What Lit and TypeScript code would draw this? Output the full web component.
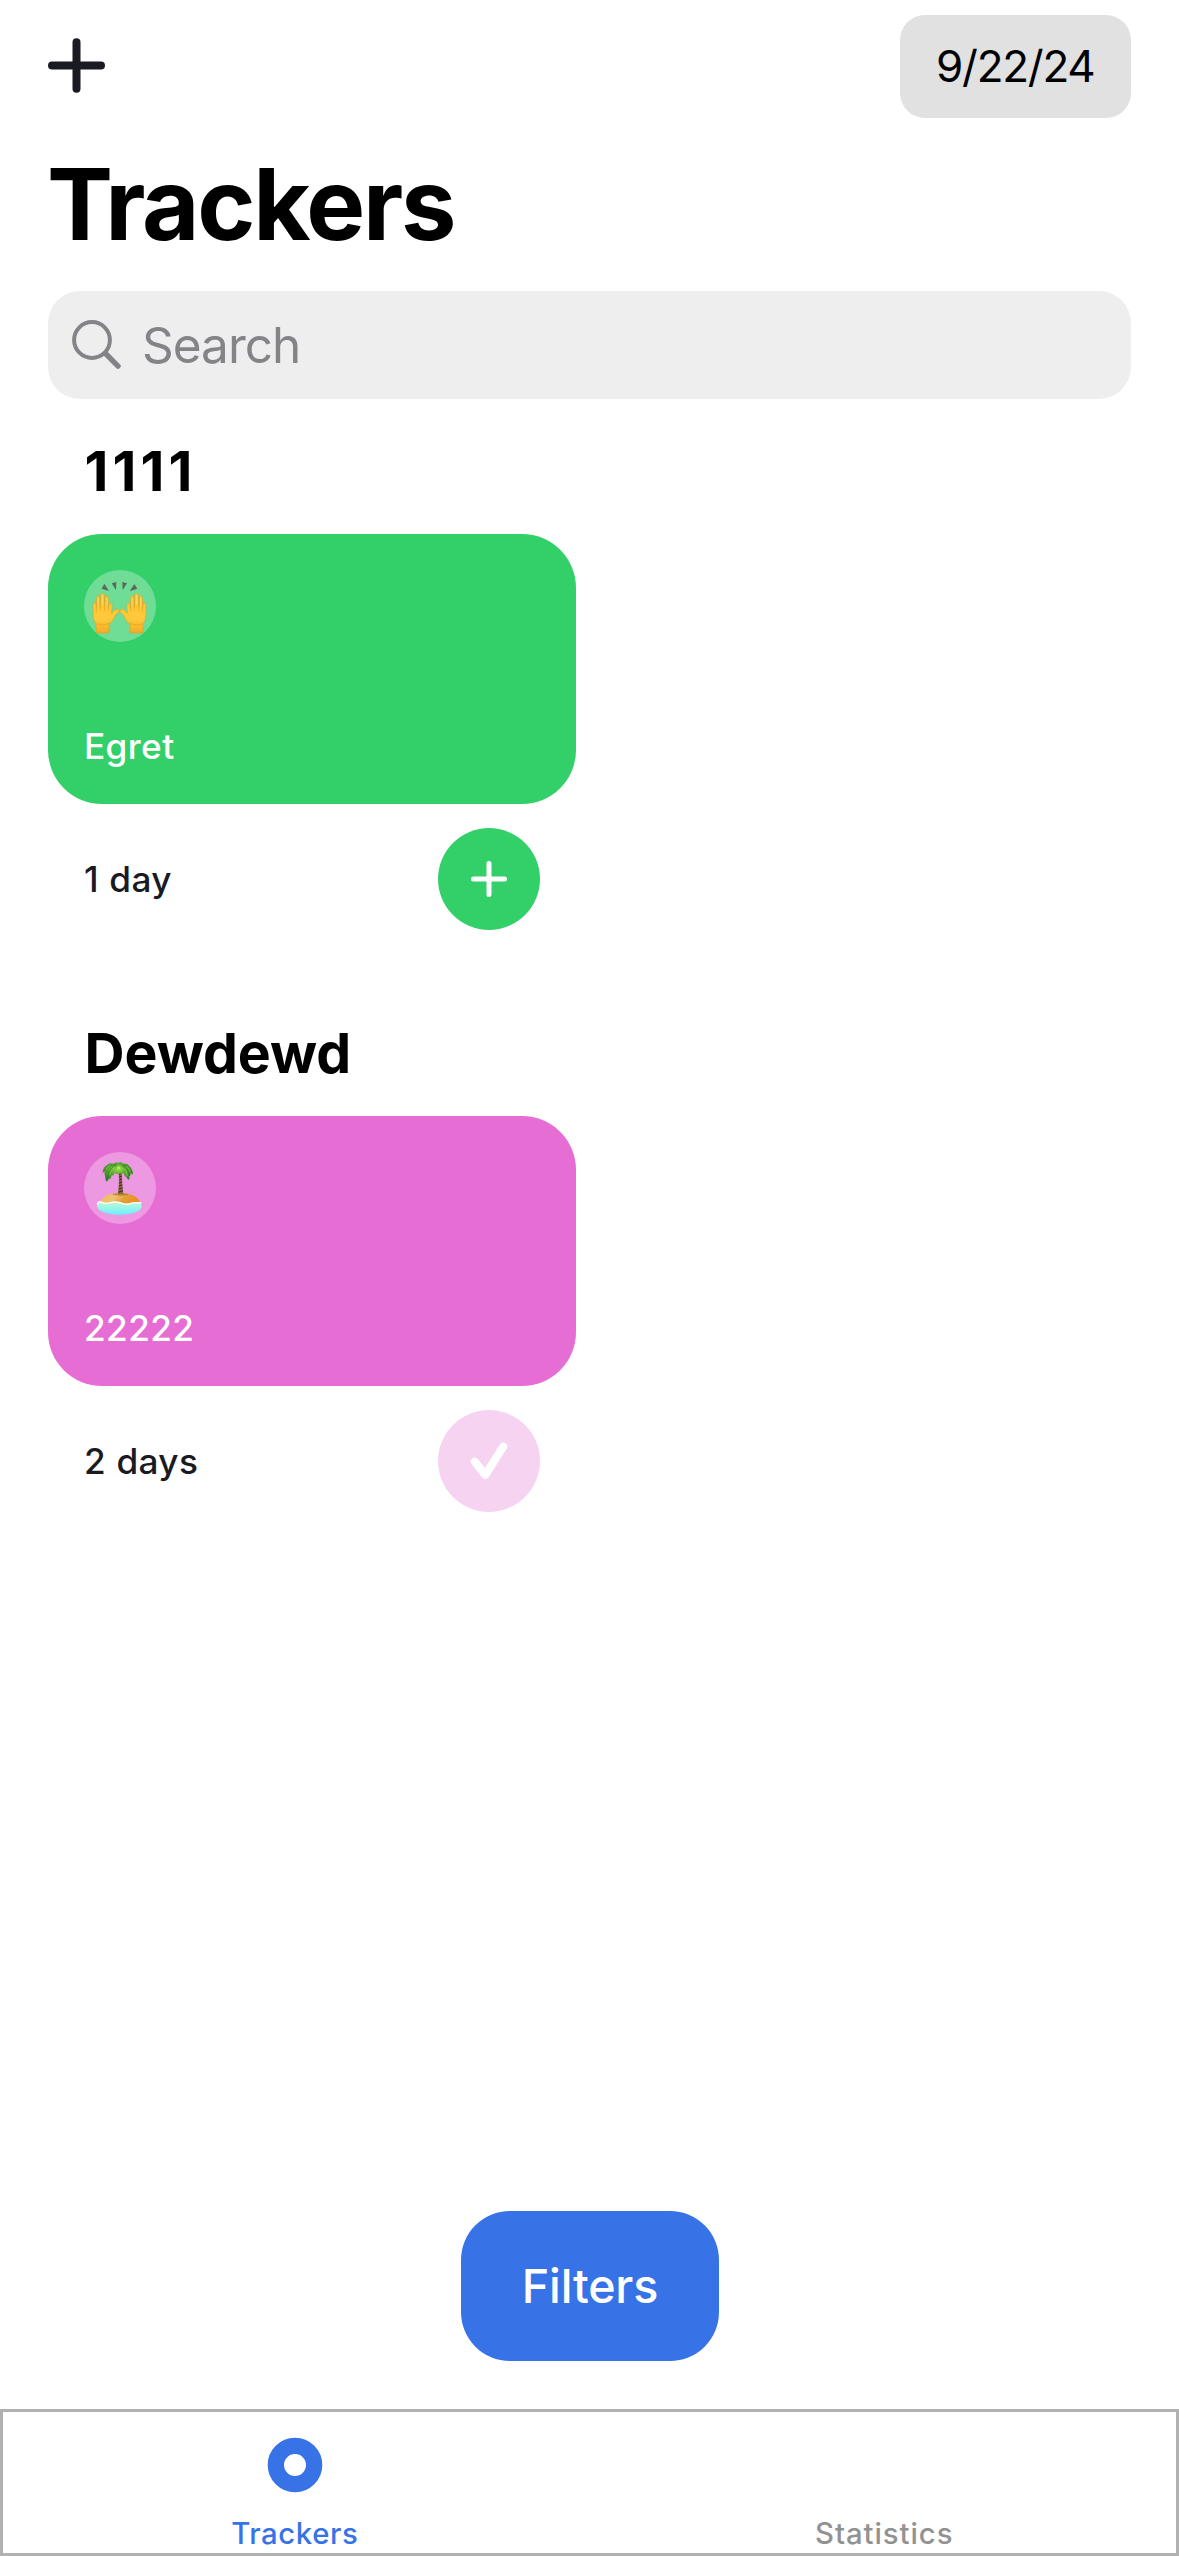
import { LitElement, html, css, svg, TemplateResult } from "lit";
import { customElement, property } from "lit/decorators.js";
import { styleMap } from "lit/directives/style-map.js";

interface Tracker {
  category: string;
  tracking: string;
  name: string;
  days: string;
  color: string;
  done: boolean;
  emoji: "hands" | "island";
}

const TRACKERS: Tracker[] = [
  { category: "1111", tracking: "4.1px", name: "Egret", days: "1 day", color: "#33cf69", done: false, emoji: "hands" },
  { category: "Dewdewd", tracking: "-0.05px", name: "22222", days: "2 days", color: "#e66dd4", done: true, emoji: "island" },
];

const hand = svg`
  <path fill="url(#skin)" stroke="#e69a16" stroke-width="1.6" stroke-linejoin="round"
    d="M79 219 L78 192 Q69 180 69 164 L69 134 Q70 128 74 129 Q78 129 78.500 135 L79 146 L80 113 Q81 107 85 107 Q89 108 89 113 L90 142 L92 106 Q93 100 98 100 Q103 100 103 106 L104 142 L106 112 Q107 107 111 108 Q115 109 115 114 L115 144 L118 132 Q120 128 124 130 Q127 132 126 139 L125 160 Q132 150 139 148 Q146 147 147 152 Q148 156 142 160 Q136 164 132 174 Q127 188 117 191 L116 219 Z"/>
  <path fill="none" stroke="#e5a01f" stroke-width="1.8" stroke-linecap="round"
    d="M79 146 V156 M90 142 V152 M104 142 V152 M115 144 V154"/>
  <path fill="none" stroke="#e29a1b" stroke-width="2.500" stroke-linecap="round" opacity=".7"
    d="M80 192 Q98 199 116 191"/>
  <path fill="none" stroke="#ffdc6b" stroke-width="3" stroke-linecap="round" opacity=".75"
    d="M84.500 114 V136 M97.500 106 V132 M110.500 114 V134"/>`;

const hands = html`<svg class="emoji" viewBox="42 30 216 216" aria-hidden="true">
  <defs>
    <linearGradient id="skin" x1="0" y1="0" x2="0" y2="1">
      <stop offset="0" stop-color="#fdc634" />
      <stop offset=".65" stop-color="#ffc93c" />
      <stop offset="1" stop-color="#f2ab26" />
    </linearGradient>
  </defs>
  <g>${hand}</g>
  <g transform="matrix(-1 0 0 1 297 0)">${hand}</g>
  <path fill="#5f6661" d="M103 71 L117 93 L95 86 Z M125 70 L139 66 L138 91 Z M157 66 L171 70 L158 91 Z M193 72 L202 86 L179 94 Z" />
</svg>`;

const island = html`<svg class="emoji" viewBox="42 36 216 216" aria-hidden="true">
  <defs>
    <linearGradient id="sea" x1="0" y1="0" x2="0" y2="1">
      <stop offset="0" stop-color="#d9f5c4" />
      <stop offset=".5" stop-color="#a4f6e2" />
      <stop offset="1" stop-color="#66efff" />
    </linearGradient>
    <linearGradient id="sand" x1="0" y1="0" x2="1" y2=".25">
      <stop offset="0" stop-color="#f4bd3a" />
      <stop offset=".42" stop-color="#eec277" />
      <stop offset=".7" stop-color="#e0a032" />
      <stop offset="1" stop-color="#ef8f2c" />
    </linearGradient>
    <radialGradient id="leaf" cx=".5" cy=".35" r=".6">
      <stop offset="0" stop-color="#93d645" />
      <stop offset=".5" stop-color="#55a52f" />
      <stop offset="1" stop-color="#2f7d2b" />
    </radialGradient>
  </defs>
  <ellipse cx="148.500" cy="199" rx="67" ry="25" fill="url(#sea)" />
  <path d="M82 194 Q83 185 93 184" fill="none" stroke="#fff" stroke-width="4" />
  <path d="M93 184 Q104 160 148 159 Q197 160 208 182 Q210 190 204 189 Q190 186 180 191 Q164 194 150 188 Q134 184 122 188 Q104 193 93 184 Z" fill="url(#sand)" />
  <path d="M90 185 Q104 193 122 188 Q134 184 150 188 Q164 195 180 191 Q192 186 213 189" fill="none" stroke="#fff" stroke-width="4" stroke-linecap="round" />
  <ellipse cx="151" cy="163" rx="24" ry="4" fill="#8a5a16" opacity=".5" />
  <path d="M146 92 L155 92 Q155 128 160 162 L144 163 Q149 126 146 92 Z" fill="#8a6a42" />
  <path d="M147 104 L155 100 M147 112 L156 108 M148 121 L156 116 M147 130 L157 125 M147 139 L157 134 M146 148 L158 143 M145 157 L159 152" stroke="#43301a" stroke-width="3.400" />
  <path fill="url(#leaf)" d="M146 68 Q136 66 131 71 Q117 67 110 76 Q99 83 97 99 L104 94 Q102 104 106 110 Q105 119 110 125 Q115 122 117 115 L122 117 L124 107 L131 106 L133 99 Q140 104 148 100 Q157 104 161 98 Q163 109 169 110 L171 115 Q174 120 178 119 L178 108 Q183 110 182 100 L189 104 Q189 89 180 80 Q172 68 160 71 Q152 65 146 68 Z" />
  <path d="M140 76 Q122 78 112 112 M138 74 Q116 74 104 92 M156 76 Q174 84 178 108 M160 75 Q178 78 186 98" fill="none" stroke="#2c6f25" stroke-width="2.500" opacity=".6" />
  <path d="M134 82 Q122 88 119 106 M160 84 Q170 90 172 108 M120 76 Q112 80 108 90 M168 78 Q178 84 181 94" fill="none" stroke="#8dd14b" stroke-width="3" opacity=".8" />
  <circle cx="148" cy="87" r="10" fill="#86cc45" />
  <circle cx="146" cy="84" r="5" fill="#aee667" />
</svg>`;

const plusMark = html`<svg class="mark" viewBox="0 0 102 102" aria-hidden="true">
  <path d="M51 35.500V66.500M35.500 51H66.500" stroke="#fff" stroke-width="5" stroke-linecap="round" />
</svg>`;

const checkMark = html`<svg class="mark" viewBox="0 0 102 102" aria-hidden="true">
  <path d="M36.800 51.700L47.300 65L65.200 36.700" fill="none" stroke="#fff" stroke-width="8" stroke-linecap="round" stroke-linejoin="round" />
</svg>`;

@customElement("tracker-section")
export class TrackerSection extends LitElement {
  @property({ attribute: false }) tracker!: Tracker;

  static styles = css`
    :host { display: block; }
    .title {
      margin: 0 0 33px;
      padding-left: 36.5px;
      font-size: 55.4px;
      line-height: 60px;
      font-weight: 700;
      color: #000;
    }
    .tile { width: 528px; }
    .card {
      box-sizing: border-box;
      height: 270px;
      padding: 36px;
      border-radius: 54px;
      display: flex;
      flex-direction: column;
      justify-content: space-between;
    }
    .badge {
      width: 72px;
      height: 72px;
      border-radius: 50%;
      background: rgba(255, 255, 255, 0.3);
    }
    .emoji { display: block; width: 72px; height: 72px; }
    .name, .days {
      font-size: 35.2px;
      line-height: 43px;
      font-weight: 500;
      letter-spacing: 0.38px;
    }
    .name { color: #fff; }
    .days { color: #1a1b22; word-spacing: 0.6px; }
    .row {
      display: flex;
      align-items: center;
      justify-content: space-between;
      padding: 24px 36px 0;
    }
    .toggle {
      width: 102px;
      height: 102px;
      padding: 0;
      border: 0;
      border-radius: 50%;
      display: block;
    }
    .mark { display: block; width: 102px; height: 102px; }
  `;

  render(): TemplateResult {
    const t = this.tracker;
    const fill = t.done ? t.color + "4d" : t.color;
    return html`
      <h2 class="title" style=${styleMap({ letterSpacing: t.tracking })}>${t.category}</h2>
      <div class="tile">
        <div class="card" style=${styleMap({ background: t.color })}>
          <div class="badge">${t.emoji === "hands" ? hands : island}</div>
          <div class="name">${t.name}</div>
        </div>
        <div class="row">
          <span class="days">${t.days}</span>
          <button class="toggle" style=${styleMap({ background: fill })}>${t.done ? checkMark : plusMark}</button>
        </div>
      </div>
    `;
  }
}

@customElement("app-root")
export class AppRoot extends LitElement {
  static styles = css`
    :host {
      display: block;
      font-family: Inter, "Liberation Sans", sans-serif;
      background: #fff;
    }
    .screen {
      box-sizing: border-box;
      height: 2556px;
      display: flex;
      flex-direction: column;
    }
    .content {
      flex: 1;
      display: flex;
      flex-direction: column;
      padding: 15px 48px 0;
    }
    .bar {
      height: 103px;
      display: flex;
      align-items: center;
      justify-content: space-between;
    }
    .add { display: block; width: 57px; height: 57px; margin-bottom: 3px; }
    .date {
      box-sizing: border-box;
      width: 231px;
      height: 103px;
      border-radius: 25px;
      padding-left: 36px;
      background: #e1e1e1;
      color: #000;
      font-size: 44px;
      line-height: 103px;
      letter-spacing: -1.25px;
      white-space: nowrap;
    }
    .heading {
      margin: 36px 0 37px -1px;
      font-size: 99px;
      line-height: 100px;
      font-weight: 700;
      letter-spacing: -2.24px;
      color: #000;
    }
    .search {
      display: flex;
      align-items: center;
      height: 108px;
      padding-left: 23px;
      border-radius: 32px;
      background: #eeeeee;
      color: #848488;
      font-size: 49.5px;
      line-height: 108px;
      letter-spacing: -1px;
    }
    .lens { display: block; width: 52px; height: 52px; margin-right: 19px; }
    .list {
      display: flex;
      flex-direction: column;
      gap: 93px;
      padding-top: 42px;
    }
    .filters {
      align-self: center;
      margin-top: auto;
      margin-bottom: 48px;
      width: 258px;
      height: 150px;
      border: 0;
      padding: 0 0 0 1px;
      border-radius: 49px;
      background: #3772e7;
      color: #fff;
      font-family: inherit;
      font-size: 46.6px;
      font-weight: 500;
      line-height: 150px;
      letter-spacing: -0.17px;
    }
    .tabs {
      box-sizing: border-box;
      height: 147px;
      display: flex;
      box-shadow: inset 0 0 0 3px #b1b1b1;
      font-size: 29.3px;
      line-height: 36px;
      font-weight: 500;
    }
    .tab {
      flex: 1;
      display: flex;
      flex-direction: column;
      align-items: center;
      justify-content: space-between;
      padding: 28px 0 4px;
    }
    .active { color: #3772e7; letter-spacing: 0.6px; }
    .idle { color: #929292; letter-spacing: 0.95px; }
    .ring { display: block; width: 56px; height: 56px; }
    .blank { height: 56px; }
  `;

  render(): TemplateResult {
    return html`
      <div class="screen">
        <main class="content">
          <div class="bar">
            <svg class="add" viewBox="0 0 57 57" aria-hidden="true">
              <path d="M28.500 5.300V51.700M4 28.500H53" stroke="#1a1b22" stroke-width="8" stroke-linecap="round" />
            </svg>
            <div class="date">9/22/24</div>
          </div>
          <h1 class="heading">Trackers</h1>
          <div class="search">
            <svg class="lens" viewBox="0 0 52 52" fill="none" stroke="#848488" aria-hidden="true">
              <circle cx="21" cy="21" r="17.900" stroke-width="4" />
              <path d="M34.500 34.500L47 47.200" stroke-width="5.400" stroke-linecap="round" />
            </svg>
            <span>Search</span>
          </div>
          <div class="list">
            ${TRACKERS.map((t) => html`<tracker-section .tracker=${t}></tracker-section>`)}
          </div>
          <button class="filters">Filters</button>
        </main>
        <nav class="tabs">
          <div class="tab active">
            <svg class="ring" viewBox="0 0 56 56" aria-hidden="true">
              <circle cx="28" cy="28" r="19.150" fill="none" stroke="#3772e7" stroke-width="16.300" />
            </svg>
            <span>Trackers</span>
          </div>
          <div class="tab idle">
            <div class="blank"></div>
            <span>Statistics</span>
          </div>
        </nav>
      </div>
    `;
  }
}
